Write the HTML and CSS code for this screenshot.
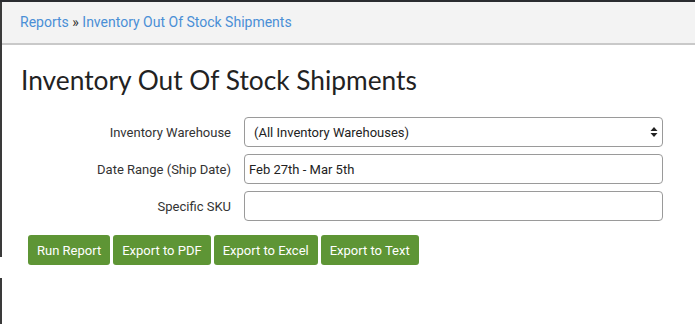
FILE: index.html
```html
<!DOCTYPE html>
<html>
<head>
<meta charset="utf-8">
<link rel="stylesheet" href="styles.css">
</head>
<body>
<div class="frame">
  <nav class="crumbs">
    <a href="#">Reports</a> <span class="sep">»</span> <a href="#">Inventory Out Of Stock Shipments</a>
  </nav>
  <main class="content">
    <h1 class="title">Inventory Out Of Stock Shipments</h1>
    <form class="report-form">
      <label class="field-label">Inventory Warehouse</label>
      <div class="select-box">
        <span>(All Inventory Warehouses)</span>
        <svg class="arrows" width="8" height="12" viewBox="0 0 8 12"><path d="M4 1 L7.5 5 H0.5 Z M4 11 L0.5 7 H7.5 Z" fill="#222"/></svg>
      </div>
      <label class="field-label">Date Range (Ship Date)</label>
      <input class="text-input" type="text" value="Feb 27th - Mar 5th">
      <label class="field-label">Specific SKU</label>
      <input class="text-input" type="text" value="">
    </form>
    <div class="actions">
      <button class="btn" type="button">Run Report</button>
      <button class="btn" type="button">Export to PDF</button>
      <button class="btn" type="button">Export to Excel</button>
      <button class="btn" type="button">Export to Text</button>
    </div>
  </main>
</div>
</body>
</html>
```

FILE: styles.css
```css
html, body {
  margin: 0;
  padding: 0;
  background: #fff;
}
body {
  font-family: Roboto, "Liberation Sans", sans-serif;
  color: #333;
  width: 695px;
  height: 324px;
  overflow: hidden;
}
.frame {
  height: 322px;
  border-top: 2px solid #2a2c30;
  background-image: linear-gradient(to bottom, #3a3a3a 0, #3a3a3a 255px, #fff 255px, #fff 276px, #3a3a3a 276px);
  background-size: 2px 100%;
  background-repeat: no-repeat;
}
.crumbs {
  box-sizing: border-box;
  height: 43px;
  background: #f3f3f3;
  border-bottom: 2px solid #c9c9c9;
  margin-left: 2px;
  padding: 12px 0 0 18px;
  font-size: 14px;
  color: #4a8fd6;
}
.crumbs a {
  color: #4a8fd6;
  text-decoration: none;
}
.crumbs .sep {
  color: #333;
}
.content {
  margin-left: 2px;
  padding: 0 0 0 19px;
}
.title {
  margin: 0;
  padding-top: 19px;
  font-family: Lato, "Open Sans", sans-serif;
  font-weight: 400;
  font-size: 26.3px;
  line-height: 32px;
  color: #222;
}
.report-form {
  display: grid;
  grid-template-columns: 210px 419px;
  column-gap: 13px;
  row-gap: 7px;
  margin-top: 21px;
  align-items: center;
}
.field-label {
  text-align: right;
  font-size: 13px;
  color: #333;
}
.select-box,
.text-input {
  box-sizing: border-box;
  height: 30px;
  width: 419px;
  border: 1px solid #9a9a9a;
  border-radius: 4px;
  background: #fff;
  font-family: Roboto, "Liberation Sans", sans-serif;
  font-size: 13px;
  color: #222;
}
.select-box {
  display: flex;
  align-items: center;
  justify-content: space-between;
  padding: 0 4px 0 9px;
}
.text-input {
  padding: 0 4px;
  outline: none;
}
.actions {
  display: flex;
  gap: 3px;
  margin-top: 14px;
  margin-left: 7px;
}
.btn {
  height: 30px;
  padding: 0 9px;
  border: none;
  border-radius: 3px;
  background: #5e9535;
  color: #fff;
  font-family: Roboto, "Liberation Sans", sans-serif;
  font-size: 13px;
}
```
